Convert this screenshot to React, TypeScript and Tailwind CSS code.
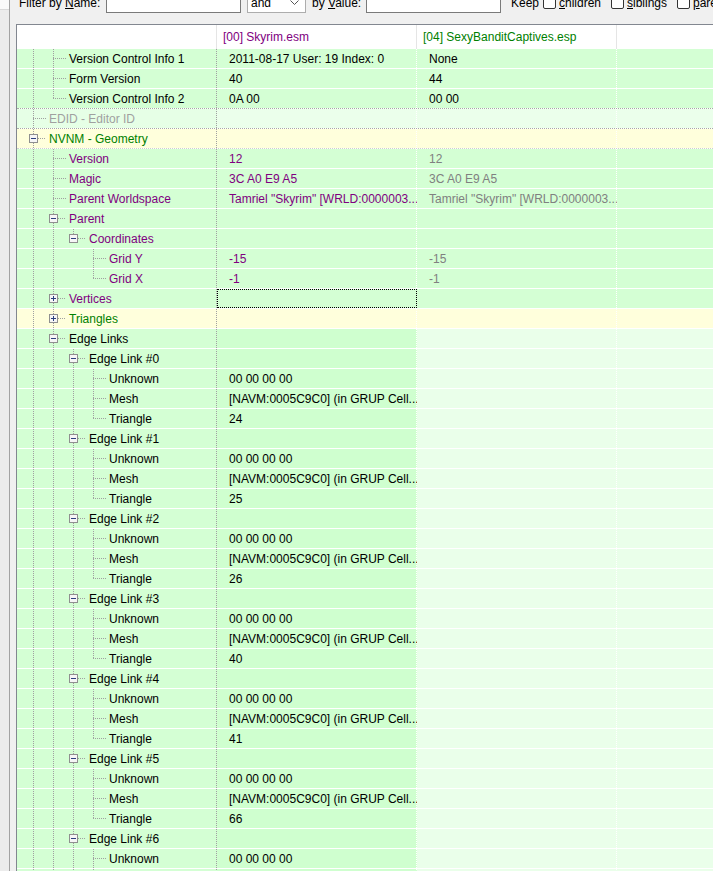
import React from 'react';

type Tone = 'black' | 'gray' | 'green' | 'purple';
type Bg = 'g' | 'light' | 'yellow' | 'split';

type Row = {
  level: number;
  label: string;
  tone: Tone;
  conn: 'tee' | 'end';
  pass: number[];
  box?: 'open' | 'closed';
  v1?: string;
  v2?: string;
  c1?: string;
  c2?: string;
  bg: Bg;
  focus?: boolean;
  sep?: string;
};

const toneClass: Record<Tone, string> = {
  black: 'text-black',
  gray: 'text-[#a0a0a0]',
  green: 'text-[#008000]',
  purple: 'text-[#800080]',
};

const bgClass: Record<Bg, [string, string, string, string]> = {
  g: ['bg-[#d4ffd4]', 'bg-[#d4ffd4]', 'bg-[#d4ffd4]', 'bg-[#d4ffd4]'],
  light: ['bg-[#e6ffe6]', 'bg-[#ebffeb]', 'bg-[#ebffeb]', 'bg-[#ebffeb]'],
  yellow: ['bg-[#ffffdc]', 'bg-[#ffffdc]', 'bg-[#ffffdc]', 'bg-[#ffffdc]'],
  split: ['bg-[#d4ffd4]', 'bg-[#cfffcf]', 'bg-[#eaffea]', 'bg-[#eaffea]'],
};

const P = 'text-[#800080]';
const G = 'text-[#808080]';

const rows: Row[] = [
  { level: 2, label: 'Version Control Info 1', tone: 'black', conn: 'tee', pass: [1], v1: '2011-08-17 User: 19 Index: 0', v2: 'None', bg: 'g' },
  { level: 2, label: 'Form Version', tone: 'black', conn: 'tee', pass: [1], v1: '40', v2: '44', bg: 'g' },
  { level: 2, label: 'Version Control Info 2', tone: 'black', conn: 'end', pass: [1], v1: '0A 00', v2: '00 00', bg: 'g', sep: 'border-b-[#a8a8a8]' },
  { level: 1, label: 'EDID - Editor ID', tone: 'gray', conn: 'tee', pass: [], bg: 'light', sep: 'border-b-[#a8a8a8]' },
  { level: 1, label: 'NVNM - Geometry', tone: 'green', conn: 'tee', pass: [], box: 'open', bg: 'yellow', sep: 'border-b-[#cfcfcf]' },
  { level: 2, label: 'Version', tone: 'purple', conn: 'tee', pass: [1], v1: '12', v2: '12', c1: P, c2: G, bg: 'g' },
  { level: 2, label: 'Magic', tone: 'purple', conn: 'tee', pass: [1], v1: '3C A0 E9 A5', v2: '3C A0 E9 A5', c1: P, c2: G, bg: 'g' },
  { level: 2, label: 'Parent Worldspace', tone: 'purple', conn: 'tee', pass: [1], v1: 'Tamriel "Skyrim" [WRLD:0000003...', v2: 'Tamriel "Skyrim" [WRLD:0000003...', c1: P, c2: G, bg: 'g' },
  { level: 2, label: 'Parent', tone: 'purple', conn: 'tee', pass: [1], box: 'open', bg: 'g' },
  { level: 3, label: 'Coordinates', tone: 'purple', conn: 'end', pass: [1, 2], box: 'open', bg: 'g' },
  { level: 4, label: 'Grid Y', tone: 'purple', conn: 'tee', pass: [1, 2], v1: '-15', v2: '-15', c1: P, c2: G, bg: 'g' },
  { level: 4, label: 'Grid X', tone: 'purple', conn: 'end', pass: [1, 2], v1: '-1', v2: '-1', c1: P, c2: G, bg: 'g' },
  { level: 2, label: 'Vertices', tone: 'purple', conn: 'tee', pass: [1], box: 'closed', bg: 'g', focus: true },
  { level: 2, label: 'Triangles', tone: 'green', conn: 'tee', pass: [1], box: 'closed', bg: 'yellow' },
  { level: 2, label: 'Edge Links', tone: 'black', conn: 'tee', pass: [1], box: 'open', bg: 'split' },
];

const triangles = ['24', '25', '26', '40', '41', '66', '67'];
triangles.forEach((t, k) => {
  rows.push({ level: 3, label: `Edge Link #${k}`, tone: 'black', conn: 'tee', pass: [1, 2], box: 'open', bg: 'split' });
  rows.push({ level: 4, label: 'Unknown', tone: 'black', conn: 'tee', pass: [1, 2, 3], v1: '00 00 00 00', bg: 'split' });
  rows.push({ level: 4, label: 'Mesh', tone: 'black', conn: 'tee', pass: [1, 2, 3], v1: '[NAVM:0005C9C0] (in GRUP Cell...', bg: 'split' });
  rows.push({ level: 4, label: 'Triangle', tone: 'black', conn: 'end', pass: [1, 2, 3], v1: t, bg: 'split' });
});

const TreeLines = ({ row }: { row: Row }) => {
  const L = row.level;
  const w = 12 + 20 * L;
  const cx = 20 * L - 3.5;
  return (
    <svg width={w} height={19} className="shrink-0">
      <g stroke="#a0a0a0" strokeDasharray="1 1" fill="none">
        {row.pass.map((p) => (
          <line key={p} x1={20 * p - 3.5} y1={0} x2={20 * p - 3.5} y2={19} />
        ))}
        <line x1={cx} y1={0} x2={cx} y2={row.conn === 'end' ? 10 : 19} />
        <line x1={row.box ? 20 * L + 1 : 20 * L - 4} y1={9.5} x2={w - 3} y2={9.5} />
      </g>
      {row.box && (
        <g>
          <rect x={20 * L - 7.5} y={5.5} width={8} height={8} fill="#f6f6f6" stroke="#8f8f8f" />
          <line x1={20 * L - 6} y1={9.5} x2={20 * L - 1} y2={9.5} stroke="#2b3f7e" />
          {row.box === 'closed' && <line x1={20 * L - 3.5} y1={7} x2={20 * L - 3.5} y2={12} stroke="#2b3f7e" />}
        </g>
      )}
    </svg>
  );
};

const TreeRow = ({ row }: { row: Row }) => {
  const [b0, b1, b2, b3] = bgClass[row.bg];
  return (
    <div className={`flex h-[20px] shrink-0 border-b border-dotted ${row.sep ?? 'border-b-white'}`}>
      <div className={`flex w-[200px] shrink-0 items-center border-r border-dotted border-r-[#a0a0a0] ${b0}`}>
        <TreeLines row={row} />
        <span className={`whitespace-nowrap ${toneClass[row.tone]}`}>{row.label}</span>
      </div>
      <div className={`flex w-[200px] shrink-0 items-center border-r border-dotted border-r-white pl-[12px] ${b1} ${row.focus ? 'outline outline-1 outline-dotted outline-black -outline-offset-1' : ''}`}>
        <span className={`whitespace-nowrap ${row.c1 ?? 'text-black'}`}>{row.v1}</span>
      </div>
      <div className={`flex w-[200px] shrink-0 items-center border-r border-dotted border-r-white pl-[12px] ${b2}`}>
        <span className={`whitespace-nowrap ${row.c2 ?? 'text-black'}`}>{row.v2}</span>
      </div>
      <div className={`flex-1 ${b3}`} />
    </div>
  );
};

const CheckBox = () => <div className="h-[13px] w-[13px] shrink-0 self-end mb-[4px] rounded-[2px] border border-[#333] bg-white" />;

export default function App() {
  return (
    <div className="flex h-[871px] w-[713px] overflow-hidden bg-[#f0f0f0] font-['Liberation_Sans',Arial,sans-serif] text-[12px] text-black">
      <div className="flex w-[10px] shrink-0 flex-col border-r border-[#a3a3a3]">
        <div className="h-[10px] border-b border-[#d9d9d9] bg-[#fafafa]" />
        <div className="flex-1 bg-[#ececec]" />
      </div>

      <div className="flex min-w-0 flex-1 flex-col pl-[6px]">
        <div className="h-[24px] shrink-0 overflow-hidden">
          <div className="-mt-[8px] flex h-[21px] items-center whitespace-nowrap">
            <span className="w-[90px] shrink-0 pl-[3px]">
              Filter by <span className="underline">N</span>ame:
            </span>
            <div className="h-[21px] w-[135px] shrink-0 border border-[#7a7a7a] bg-white" />
            <div className="ml-[6px] flex h-[21px] w-[59px] shrink-0 items-center justify-between border border-[#adadad] bg-white pl-[3px] pr-[6px]">
              <span>and</span>
              <svg width="9" height="5" viewBox="0 0 9 5">
                <path d="M0.5 0.5 L4.5 4.5 L8.5 0.5" fill="none" stroke="#555" />
              </svg>
            </div>
            <span className="ml-[6px] w-[54px] shrink-0">
              by <span className="underline">V</span>alue:
            </span>
            <div className="h-[21px] w-[135px] shrink-0 border border-[#7a7a7a] bg-white" />
            <span className="ml-[10px] w-[32px] shrink-0">Keep</span>
            <CheckBox />
            <span className="ml-[3px] w-[52px] shrink-0">
              <span className="underline">c</span>hildren
            </span>
            <CheckBox />
            <span className="ml-[3px] w-[50px] shrink-0">
              <span className="underline">s</span>iblings
            </span>
            <CheckBox />
            <span className="ml-[3px]">
              <span className="underline">p</span>arents
            </span>
          </div>
        </div>

        <div className="flex min-h-0 flex-1 flex-col overflow-hidden border-l border-t border-[#828790] bg-white">
          <div className="flex h-[24px] shrink-0">
            <div className="w-[200px] shrink-0 border-r border-[#e5e5e5]" />
            <div className="flex w-[200px] shrink-0 items-center border-r border-[#e5e5e5] pl-[6px] text-[#800080]">[00] Skyrim.esm</div>
            <div className="flex w-[200px] shrink-0 items-center border-r border-[#e5e5e5] pl-[6px] text-[#008000]">[04] SexyBanditCaptives.esp</div>
            <div className="flex-1" />
          </div>
          {rows.map((r, i) => (
            <TreeRow key={i} row={r} />
          ))}
        </div>
      </div>
    </div>
  );
}
